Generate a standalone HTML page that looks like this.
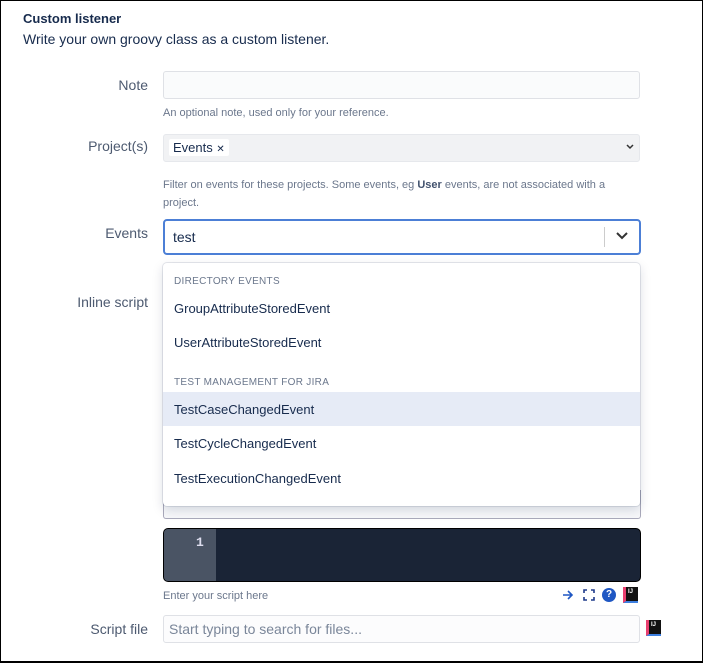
<!DOCTYPE html>
<html><head><style>
*{box-sizing:border-box;margin:0;padding:0}
body{width:703px;height:663px;overflow:hidden;background:#fff;font-family:"Liberation Sans",sans-serif;color:#172b4d;position:relative}
.frame{position:absolute;left:0;top:0;width:703px;height:663px;border:1px solid #000;border-bottom:2px solid #000}
.a{position:absolute}
.lbl{position:absolute;right:555px;font-size:14px;color:#4d5a70;text-align:right}
.help{position:absolute;left:163px;font-size:11px;color:#6b778c}
.inp{position:absolute;left:163px;width:477px;border:1px solid #dfe1e6;border-radius:3px;background:#fafbfc}
.dd{position:absolute;left:163px;top:263px;width:477px;height:243px;background:#fff;border-radius:4px;box-shadow:0 0 0 1px rgba(9,30,66,.1),0 4px 11px rgba(9,30,66,.15)}
.gh{position:absolute;left:11px;font-size:10px;color:#6b778c;letter-spacing:.3px}
.it{position:absolute;left:11px;font-size:13px;color:#172b4d}
</style></head><body>
<div class="a" style="left:23px;top:11px;font-size:13px;font-weight:bold">Custom listener</div>
<div class="a" style="left:23px;top:31px;font-size:14px">Write your own groovy class as a custom listener.</div>

<div class="lbl" style="top:77px">Note</div>
<div class="inp" style="top:71px;height:28px"></div>
<div class="help" style="top:107px">An optional note, used only for your reference.</div>

<div class="lbl" style="top:138px">Project(s)</div>
<div class="inp" style="top:134px;height:28px;background:#f1f2f4;border-color:#e6e8ec"></div>
<div class="a" style="left:169px;top:139px;height:17px;padding:1px 4px;background:#fff;font-size:13px;border-radius:2px">Events <span style="font-size:10px">✕</span></div>
<svg class="a" style="left:626px;top:144px" width="8" height="6"><path d="M1 1l3 3 3-3" stroke="#333" stroke-width="1.5" fill="none"/></svg>
<div class="help" style="top:176px;line-height:18px;width:470px">Filter on events for these projects. Some events, eg <b style="color:#42526e">User</b> events, are not associated with a project.</div>

<div class="lbl" style="top:225px">Events</div>
<div class="a" style="left:163px;top:219px;width:478px;height:36px;border:2px solid #4c7fd6;border-radius:4px;background:#fff"></div>
<div class="a" style="left:173px;top:229px;font-size:14px">test</div>
<div class="a" style="left:604px;top:227px;width:1px;height:20px;background:#ccc"></div>
<svg class="a" style="left:615px;top:231px" width="14" height="10"><path d="M2 2l5 5 5-5" stroke="#333" stroke-width="2" fill="none"/></svg>

<div class="lbl" style="top:294px">Inline script</div>
<div class="a" style="left:163px;top:490px;width:478px;height:29px;border:1px solid #aab;border-top:none;border-radius:0 0 3px 3px;background:#f7f8fa"></div>
<div class="dd">
<div class="gh" style="top:13px">DIRECTORY EVENTS</div>
<div class="it" style="top:38px">GroupAttributeStoredEvent</div>
<div class="it" style="top:72px">UserAttributeStoredEvent</div>
<div class="gh" style="top:114px">TEST MANAGEMENT FOR JIRA</div>
<div class="a" style="left:0;top:129px;width:477px;height:34px;background:#e6ebf6"></div>
<div class="it" style="top:139px">TestCaseChangedEvent</div>
<div class="it" style="top:173px">TestCycleChangedEvent</div>
<div class="it" style="top:208px">TestExecutionChangedEvent</div>
</div>

<div class="a" style="left:163px;top:528px;width:478px;height:54px;background:#1a2436;border:1px solid #000;border-radius:5px;overflow:hidden">
<div style="position:absolute;left:0;top:0;width:52px;height:54px;background:#4a5464"></div>
<div style="position:absolute;left:32px;top:6px;color:#dde;font-family:'Liberation Mono',monospace;font-size:13px;font-weight:bold">1</div>
</div>
<div class="help" style="top:590px">Enter your script here</div>
<svg class="a" style="left:562px;top:589px" width="12" height="12"><path d="M1 6h9M6 2l4 4-4 4" stroke="#1f57c3" stroke-width="1.6" fill="none"/></svg>
<svg class="a" style="left:583px;top:589px" width="12" height="12"><path d="M1 4V1h3M8 1h3v3M11 8v3H8M4 11H1V8" stroke="#1f3a8a" stroke-width="1.6" fill="none"/></svg>
<div class="a" style="left:602px;top:588px;width:14px;height:14px;border-radius:50%;background:#1f57c3;color:#fff;font-size:10px;font-weight:bold;text-align:center;line-height:14px">?</div>
<div class="a" style="left:623px;top:587px;width:15px;height:16px;background:#111;border-left:3px solid #e83f6f;border-bottom:2px solid #3d7fe0;color:#fff;font-size:6px;font-weight:bold;padding:2px">IJ</div>

<div class="lbl" style="top:621px">Script file</div>
<div class="inp" style="top:615px;height:28px;background:#fcfcfd"></div>
<div class="a" style="left:169px;top:621px;font-size:14px;color:#7a8699">Start typing to search for files...</div>
<div class="a" style="left:646px;top:620px;width:15px;height:16px;background:#111;border-left:3px solid #e83f6f;border-bottom:2px solid #3d7fe0;color:#fff;font-size:6px;font-weight:bold;padding:2px">IJ</div>
<div class="frame"></div>
</body></html>
